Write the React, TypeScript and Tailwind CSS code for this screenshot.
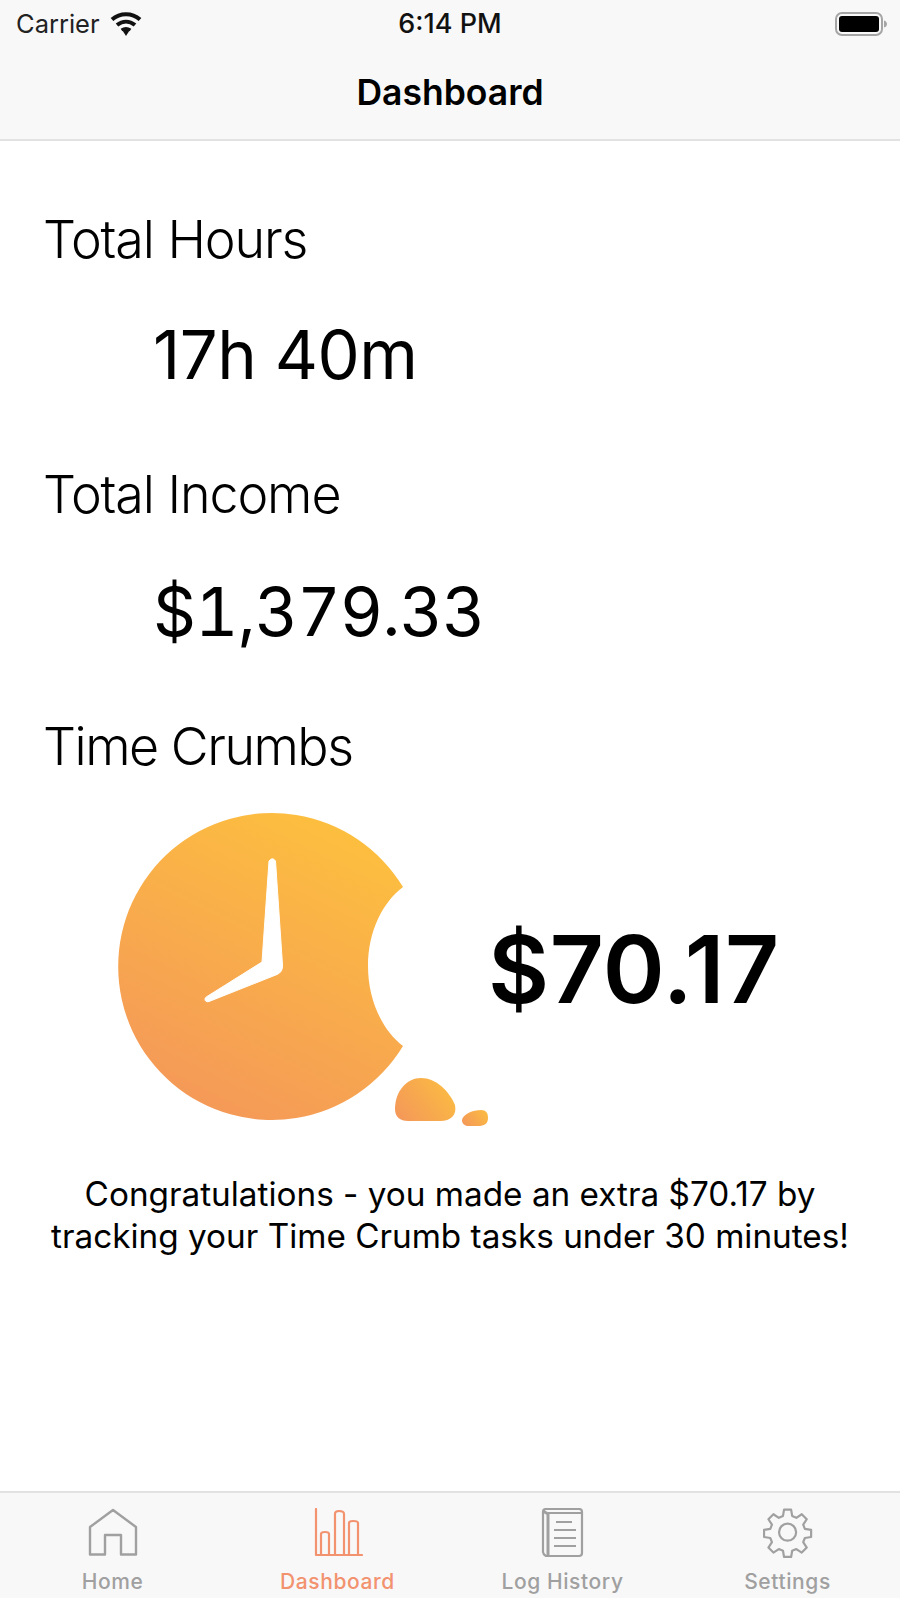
import React from 'react';

const font = { fontFamily: 'Inter, sans-serif' };

function WifiIcon() {
  return (
    <svg width="34" height="26" viewBox="0 0 34 26" fill="none" stroke="#111" strokeWidth="4">
      <path d="M3 8.5C11 1.5 23 1.5 31 8.5" />
      <path d="M8 14C13.5 9.5 20.5 9.5 26 14" />
      <path d="M12.5 19C15.5 17 18.5 17 21.5 19" strokeWidth="3" />
      <path d="M13.5 19.5L17 25L20.5 19.5C18 18 16 18 13.5 19.5Z" fill="#111" stroke="none" />
    </svg>
  );
}

function BatteryIcon() {
  return (
    <svg width="54" height="26" viewBox="0 0 54 26" fill="none">
      <rect x="1" y="2" width="46" height="22" rx="6" stroke="#a5a5a5" strokeWidth="2" />
      <rect x="4" y="5" width="40" height="16" rx="3" fill="#000" />
      <path d="M49 9.5C51 10 52 11.5 52 13C52 14.5 51 16 49 16.5Z" fill="#a5a5a5" />
    </svg>
  );
}

function ClockLogo() {
  return (
    <svg width="372" height="316" viewBox="118 813 372 316" className="shrink-0">
      <defs>
        <linearGradient id="crumb" gradientUnits="userSpaceOnUse" x1="350" y1="820" x2="200" y2="1120">
          <stop offset="0" stopColor="#fdc03e" />
          <stop offset="1" stopColor="#f49859" />
        </linearGradient>
        <linearGradient id="crumb2" gradientUnits="userSpaceOnUse" x1="450" y1="1085" x2="400" y2="1122">
          <stop offset="0" stopColor="#fbbb42" />
          <stop offset="1" stopColor="#f49859" />
        </linearGradient>
        <linearGradient id="crumb3" gradientUnits="userSpaceOnUse" x1="486" y1="1111" x2="464" y2="1127">
          <stop offset="0" stopColor="#fbbb42" />
          <stop offset="1" stopColor="#f49859" />
        </linearGradient>
      </defs>
      <path d="M403 888A153.5 153.5 0 1 0 403 1047C383 1032 368 1002 368 967C368 932 383 903 403 888Z" fill="url(#crumb)" />
      <path
        d="M269 862Q272.5 857.5 275.5 862L282.5 966Q283 973 277 975.5L209 1002.5Q205 1003.5 205 1000Q205 998.5 207 997.5L262 963L269 862Z"
        fill="#fff"
        stroke="#fff"
        strokeWidth="1"
        strokeLinejoin="round"
      />
      <path
        d="M395 1110C395 1092 407 1079 421 1079C436 1079 449 1092 455 1106C457 1116 451 1122 440 1122L408 1122C400 1122 395 1118 395 1110Z"
        fill="url(#crumb2)"
      />
      <path
        d="M462 1121C463 1115 473 1111 481 1111C486 1111 488 1114 488 1119C488 1125 484 1127 478 1127L469 1127C465 1127 462 1125 462 1121Z"
        fill="url(#crumb3)"
      />
    </svg>
  );
}

function HomeIcon() {
  return (
    <svg width="50" height="50" viewBox="0 0 50 50" fill="none" stroke="#a0a0a0" strokeWidth="2.4" strokeLinejoin="round">
      <path d="M25 2L48 19V46.5H33V27H17V46.5H2V19Z" />
    </svg>
  );
}

function ChartIcon() {
  return (
    <svg width="50" height="50" viewBox="0 0 50 50" fill="none" stroke="#f2926f" strokeWidth="2.2" strokeLinejoin="round">
      <path d="M3 1V47H49" strokeLinecap="round" />
      <path d="M8 46V26Q8 24 12 24Q16 24 16 26V46" />
      <path d="M22 46V6Q22 3 26 3Q31 3 31 6V46" />
      <path d="M36 46V15Q36 13 40 13Q45 13 45 15V46" />
    </svg>
  );
}

function LogIcon() {
  return (
    <svg width="50" height="50" viewBox="0 0 50 50" fill="none" stroke="#a0a0a0" strokeWidth="2.2" strokeLinejoin="round">
      <path d="M8 1H41Q44 1 44 4V45Q44 48 41 48H8Q5 46 5 44V4Q5 1 8 1Z" />
      <path d="M5 3L10 6V48" strokeWidth="3" />
      <path d="M10 5H44" strokeWidth="2" />
      <path d="M18 14H34M16 22H38M16 30H38M16 38H38" />
    </svg>
  );
}

function GearIcon() {
  return (
    <svg width="50" height="50" viewBox="0 0 24 24" fill="none" stroke="#a0a0a0" strokeWidth="1.05" strokeLinejoin="round">
      <path d="M10.3 1.2h3.4l.5 3 2 .9 2.6-1.7 2.4 2.4-1.7 2.6.8 2 3 .5v3.4l-3 .5-.8 2 1.7 2.6-2.4 2.4-2.6-1.7-2 .8-.5 3h-3.4l-.5-3-2-.8-2.6 1.7-2.4-2.4 1.7-2.6-.8-2-3-.5v-3.4l3-.5.8-2-1.7-2.6 2.4-2.4 2.6 1.7 2-.9z" transform="translate(-0.2 -0.4)" />
      <circle cx="11.8" cy="11.6" r="4.1" />
    </svg>
  );
}

const tabs = [
  { label: 'Home', icon: <HomeIcon />, active: false },
  { label: 'Dashboard', icon: <ChartIcon />, active: true },
  { label: 'Log History', icon: <LogIcon />, active: false },
  { label: 'Settings', icon: <GearIcon />, active: false },
];

export default function App() {
  return (
    <div className="flex h-[1598px] w-[900px] flex-col overflow-hidden bg-white text-black" style={font}>
      <header className="h-[141px] shrink-0 border-b-2 border-[#e2e2e2] bg-[#f8f8f8]">
        <div className="relative flex h-[48px] items-center justify-between pl-[16px] pr-[11px]">
          <div className="flex items-center gap-[9px]">
            <span className="text-[25.5px] leading-[48px] text-[#222]">Carrier</span>
            <WifiIcon />
          </div>
          <span className="absolute left-0 right-0 text-center text-[27px] font-medium text-[#111]">6:14 PM</span>
          <BatteryIcon />
        </div>
        <h1 className="text-center text-[35.5px] leading-[90px] font-semibold">Dashboard</h1>
      </header>

      <main className="flex-1">
        <section className="px-[43px] pt-[69px]">
          <h2 className="text-[52px] leading-[60px] font-light tracking-[-1.1px]">Total Hours</h2>
          <p className="mt-[55px] pl-[110px] text-[67px] leading-[60px] tracking-[-0.5px]">17h 40m</p>
          <h2 className="mt-[80px] text-[52px] leading-[60px] font-light tracking-[-1.1px]">Total Income</h2>
          <p className="mt-[57px] pl-[110px] text-[67px] leading-[60px] tabular-nums tracking-[-0.9px]">$1,379.33</p>
          <h2 className="mt-[75px] text-[52px] leading-[60px] font-light tracking-[-1.5px]">Time Crumbs</h2>
        </section>

        <section className="mt-[35px] flex items-center pl-[118px]">
          <ClockLogo />
          <p className="-ml-[2px] -mt-[3px] text-[94px] leading-[110px] font-semibold tracking-[0.5px]">$70.17</p>
        </section>

        <p className="mt-[45px] text-center text-[33.3px] leading-[42px]">
          Congratulations - you made an extra $70.17 by
          <br />
          tracking your Time Crumb tasks under 30 minutes!
        </p>
      </main>

      <nav className="grid h-[107px] shrink-0 grid-cols-4 border-t-2 border-[#e2e2e2] bg-[#f8f8f8]">
        {tabs.map((tab) => (
          <div key={tab.label} className="flex flex-col items-center pt-[15px]">
            {tab.icon}
            <span
              className={`mt-[10px] text-[21px] leading-[28px] font-medium tracking-[0.6px] ${
                tab.active ? 'text-[#f2926f]' : 'text-[#a0a0a0]'
              }`}
            >
              {tab.label}
            </span>
          </div>
        ))}
      </nav>
    </div>
  );
}
